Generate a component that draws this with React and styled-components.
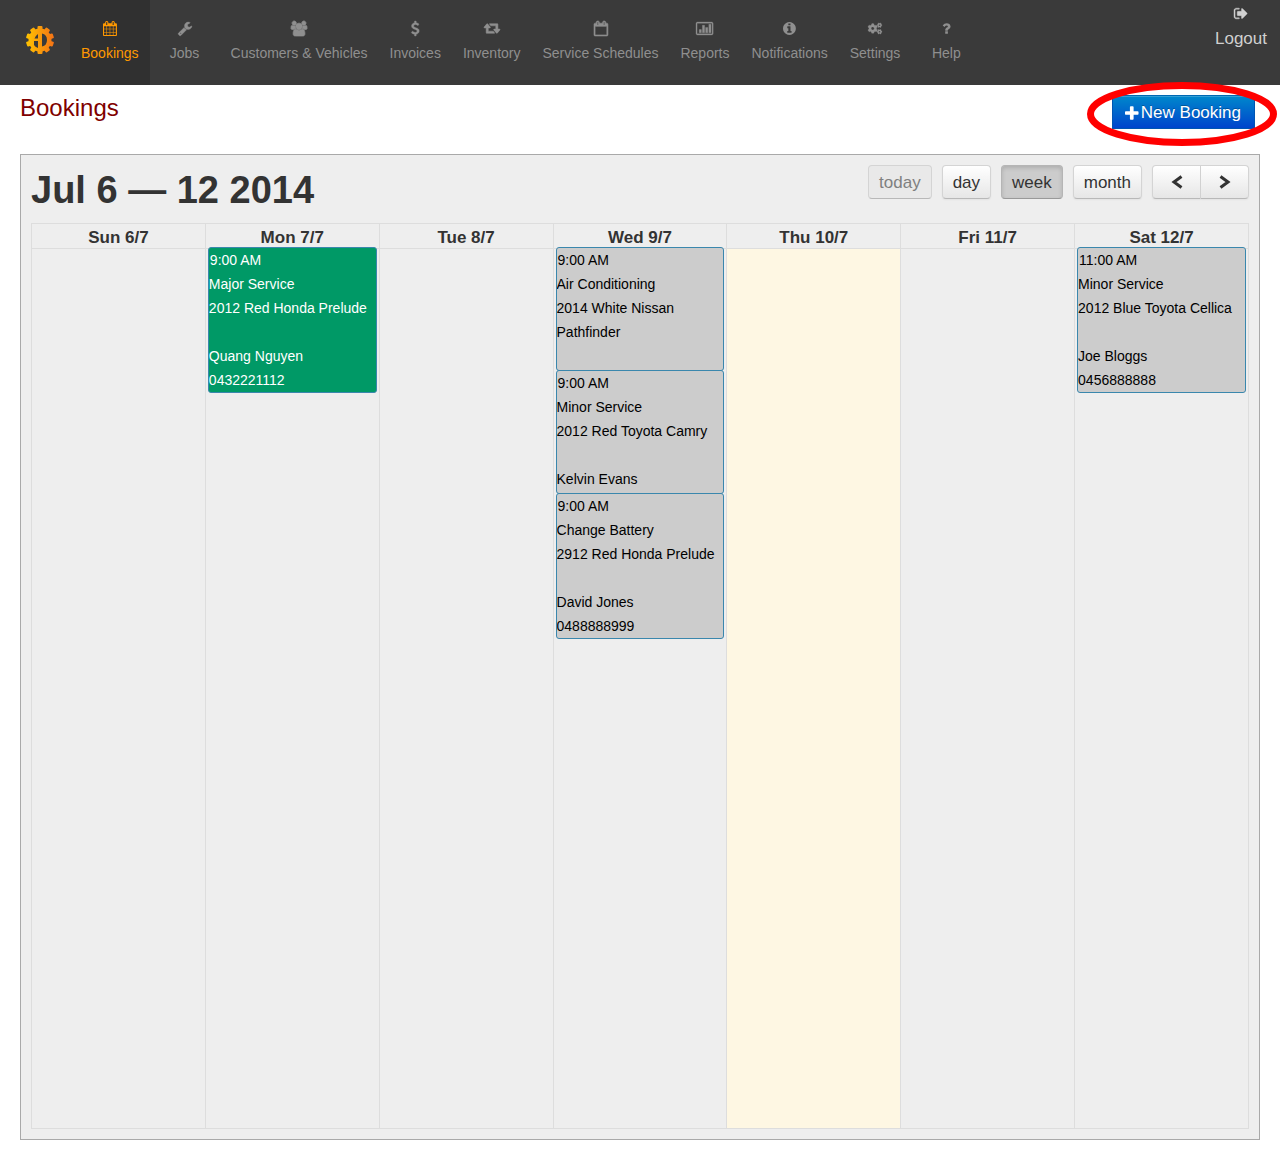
import React from "react";
import styled, { createGlobalStyle, css } from "styled-components";
import { FaCogs } from "react-icons/fa";

const Global = createGlobalStyle`
  *, *::before, *::after { box-sizing: border-box; }
  body {
    margin: 0;
    background: #fff;
    color: #333;
    font-family: "Liberation Sans", Arial, sans-serif;
    font-size: 17px;
    line-height: 24px;
  }
`;

const ICONS = {
  calendar: ["64 0 1664 1792", "M192 1664h288v-288h-288v288zm352 0h320v-288h-320v288zm-352-352h288v-320h-288v320zm352 0h320v-320h-320v320zm-352-384h288v-288h-288v288zm736 736h320v-288h-320v288zm-384-736h320v-288h-320v288zm768 736h288v-288h-288v288zm-384-352h320v-320h-320v320zm-352-864v-288q0-13-9.5-22.5t-22.5-9.5h-64q-13 0-22.5 9.5t-9.5 22.5v288q0 13 9.5 22.5t22.5 9.5h64q13 0 22.5-9.5t9.5-22.5zm736 864h288v-320h-288v320zm-384-384h320v-288h-320v288zm384 0h288v-288h-288v288zm32-480v-288q0-13-9.5-22.5t-22.5-9.5h-64q-13 0-22.5 9.5t-9.5 22.5v288q0 13 9.5 22.5t22.5 9.5h64q13 0 22.5-9.5t9.5-22.5zm384-64v1280q0 52-38 90t-90 38h-1408q-52 0-90-38t-38-90v-1280q0-52 38-90t90-38h128v-96q0-66 47-113t113-47h64q66 0 113 47t47 113v96h384v-96q0-66 47-113t113-47h64q66 0 113 47t47 113v96h128q52 0 90 38t38 90z"],
  calendarOutline: ["64 0 1664 1792", "M192 1664h1408v-1024h-1408v1024zm384-1216v-288q0-13-9.5-22.5t-22.5-9.5h-64q-13 0-22.5 9.5t-9.5 22.5v288q0 13 9.5 22.5t22.5 9.5h64q13 0 22.5-9.5t9.5-22.5zm768 0v-288q0-13-9.5-22.5t-22.5-9.5h-64q-13 0-22.5 9.5t-9.5 22.5v288q0 13 9.5 22.5t22.5 9.5h64q13 0 22.5-9.5t9.5-22.5zm384-64v1280q0 52-38 90t-90 38h-1408q-52 0-90-38t-38-90v-1280q0-52 38-90t90-38h128v-96q0-66 47-113t113-47h64q66 0 113 47t47 113v96h384v-96q0-66 47-113t113-47h64q66 0 113 47t47 113v96h128q52 0 90 38t38 90z"],
  wrench: ["64 0 1664 1792", "M448 1472q0-26-19-45t-45-19-45 19-19 45 19 45 45 19 45-19 19-45zm644-420l-682 682q-37 37-90 37-52 0-91-37l-106-108q-38-36-38-90 0-53 38-91l681-681q39 98 114.5 173.5t173.5 114.5zm634-435q0 39-23 106-47 134-164.5 217.5t-258.5 83.5q-185 0-316.5-131.5t-131.5-316.5 131.5-316.5 316.5-131.5q58 0 121.5 16.5t107.5 46.5q16 11 16 28t-16 28l-293 169v224l193 107q5-3 79-48.5t135.5-81 70.5-35.5q15 0 23.5 10t8.5 25z"],
  users: ["0 0 1920 1792", "M593 896q-162 5-265 128h-134q-82 0-138-40.5t-56-118.5q0-353 124-353 6 0 43.5 21t97.5 42.5 119 21.5q67 0 133-23-5 37-5 66 0 139 81 256zM1664 1533q0 120-73 189.5t-194 69.5h-874q-121 0-194-69.5t-73-189.5q0-53 3.5-103.5t14-109 26.5-108.5 43-97.5 62-81 85.5-53.5 111.5-20q10 0 43 21.5t73 48 107 48 135 21.5 135-21.5 107-48 73-48 43-21.5q61 0 111.5 20t85.5 53.5 62 81 43 97.5 26.5 108.5 14 109 3.5 103.5zM640 256q0 106-75 181t-181 75-181-75-75-181 75-181 181-75 181 75 75 181zM1344 640q0 159-112.5 271.5t-271.5 112.500-271.5-112.500-112.500-271.500 112.500-271.500 271.500-112.500 271.500 112.500 112.500 271.500zM1920 865q0 78-56 118.500t-138 40.500h-134q-103-123-265-128 81-117 81-256 0-29-5-66 66 23 133 23 59 0 119-21.500t97.500-42.500 43.500-21q124 0 124 353zM1792 256q0 106-75 181t-181 75-181-75-75-181 75-181 181-75 181 75 75 181z"],
  dollar: ["384 0 1024 1792", "M1362 1185q0 153-99.5 263.5t-258.5 136.5v175q0 14-9 23t-23 9h-135q-13 0-22.5-9.5t-9.5-22.5v-175q-66-9-127.5-31t-101.5-44.5-74-48-46.5-37.5-17.5-18q-17-21-2-41l103-135q7-10 23-12 15-2 24 9l2 2q113 99 243 125 37 8 74 8 81 0 142.5-43t61.5-122q0-28-15-53t-33.5-42-58.5-37.5-66-32-80-32.5q-39-16-61.5-25t-61.5-26.5-62.5-31-56.5-35.5-53.5-42.5-43.5-49-35.5-58-21-66.5-8.5-78q0-138 98-242t255-134v-180q0-13 9.5-22.5t22.5-9.5h135q14 0 23 9t9 23v176q57 6 110.5 23t87 33.5 63.5 37.5 39 29 15 14q17 18 5 38l-81 146q-8 15-23 16-14 3-27-7-3-3-14.5-12t-39-26.5-58.5-32-74.5-26-85.5-11.5q-95 0-155 43t-60 111q0 26 8.5 48t29.5 41.5 39.5 33 56 31 60.5 27 70 27.5q53 20 81 31.5t76 35 75.5 42.5 62 50 53 63.5 31.5 76.5 13 94z"],
  retweet: ["64 64 1920 1792", "M1344 1504q0 13-9.5 22.5t-22.5 9.5h-960q-8 0-13.5-2t-9-7-5.5-8-3-11.5-1-11.5v-600h-192q-26 0-45-19t-19-45q0-24 15-41l320-384q19-22 49-22t49 22l320 384q15 17 15 41 0 26-19 45t-45 19h-192v384h576q16 0 25 11l160 192q7 10 7 21zm640-416q0 24-15 41l-320 384q-20 23-49 23t-49-23l-320-384q-15-17-15-41 0-26 19-45t45-19h192v-384h-576q-16 0-25-12l-160-192q-7-9-7-20 0-13 9.5-22.5t22.5-9.5h960q8 0 13.5 2t9 7 5.5 8 3 11.5 1 11.5v600h192q26 0 45 19t19 45z"],
  chart: ["0 0 2048 1792", "M160 128h1728q66 0 113 47t47 113v1216q0 66-47 113t-113 47h-1728q-66 0-113-47t-47-113v-1216q0-66 47-113t113-47zm0 128q-32 0-32 32v1216q0 32 32 32h1728q32 0 32-32v-1216q0-32-32-32zM384 1024h256v384h-256zM768 512h256v896h-256zM1152 768h256v640h-256zM1536 384h256v1024h-256z"],
  info: ["128 0 1536 1792", "M1152 1376v-160q0-14-9-23t-23-9h-96v-512q0-14-9-23t-23-9h-320q-14 0-23 9t-9 23v160q0 14 9 23t23 9h96v320h-96q-14 0-23 9t-9 23v160q0 14 9 23t23 9h448q14 0 23-9t9-23zm-128-896v-160q0-14-9-23t-23-9h-192q-14 0-23 9t-9 23v160q0 14 9 23t23 9h192q14 0 23-9t9-23zm640 416q0 209-103 385.5t-279.5 279.5-385.5 103-385.5-103-279.5-279.5-103-385.5 103-385.5 279.5-279.5 385.5-103 385.5 103 279.5 279.5 103 385.5z"],
  question: ["384 0 1024 1792", "M1088 1256v240q0 16-12 28t-28 12h-240q-16 0-28-12t-12-28v-240q0-16 12-28t28-12h240q16 0 28 12t12 28zm316-600q0 54-15.5 101t-35 76.5-55 59.5-57.5 43.5-61 35.5q-41 23-68.5 65t-27.5 67q0 17-12 32.5t-28 15.5h-240q-15 0-25.5-18.5t-10.5-37.5v-45q0-83 65-156.5t143-108.5q59-27 84-56t25-76q0-42-46.5-74t-107.5-32q-65 0-108 29-35 25-107 115-13 16-31 16-12 0-25-8l-164-125q-13-10-15.5-25t5.5-28q160-266 464-266 80 0 161 31t146 83 106 127.5 41 158.5z"],
  signOut: ["64 0 1600 1792", "M704 1440q0 4 1 20t.5 26.5-3 23.5-10 19.5-20.5 6.5h-320q-119 0-203.5-84.5t-84.5-203.5v-704q0-119 84.5-203.5t203.5-84.5h320q13 0 22.5 9.5t9.5 22.5q0 4 1 20t.5 26.5-3 23.5-10 19.5-20.5 6.5h-320q-66 0-113 47t-47 113v704q0 66 47 113t113 47h312l11.5 1 11.5 3 8 5.5 7 9 2 13.5zm928-544q0 26-19 45l-544 544q-19 19-45 19t-45-19-19-45v-288h-448q-26 0-45-19t-19-45v-384q0-26 19-45t45-19h448v-288q0-26 19-45t45-19 45 19l544 544q19 19 19 45z"],
  plus: ["192 0 1408 1664", "M1600 736v192q0 40-28 68t-68 28h-416v416q0 40-28 68t-68 28h-192q-40 0-68-28t-28-68v-416h-416q-40 0-68-28t-28-68v-192q0-40 28-68t68-28h416v-416q0-40 28-68t68-28h192q40 0 68 28t28 68v416h416q40 0 68 28t28 68z"],
};

const BOLD = { users: 90, calendarOutline: 70, chart: 40, dollar: 50, retweet: 60, signOut: 50, wrench: 40 };

const Glyph = styled.svg`
  display: block;
  height: ${(p) => p.$size || 15}px;
  fill: currentColor;
  stroke: currentColor;
  overflow: visible;
`;

function Icon({ name, size }) {
  if (name === "cogs") return <Glyph as={FaCogs} width="16" height="15" strokeWidth="14" aria-hidden="true" />;
  const [viewBox, d] = ICONS[name];
  return (
    <Glyph viewBox={viewBox} $size={size} aria-hidden="true">
      <path d={d} strokeWidth={BOLD[name] || 0} fillRule={name === "users" ? "nonzero" : "evenodd"} />
    </Glyph>
  );
}

const TopBar = styled.header`
  display: flex;
  height: 85px;
  background: #3a3a3a;
`;

const Brand = styled.a`
  display: flex;
  justify-content: center;
  width: 70px;
  padding: 26px 0 0 10px;
`;

const Nav = styled.nav`
  display: flex;
  flex: 1;
`;

const NavLink = styled.a`
  display: flex;
  flex-direction: column;
  align-items: center;
  gap: 5px;
  min-width: 70px;
  padding: 21px 11px 0;
  font-size: 14px;
  white-space: nowrap;
  text-decoration: none;
  color: ${(p) => (p.$active ? "#ff9900" : "#8f8f8f")};
  background: ${(p) => (p.$active ? "#303030" : "transparent")};
`;

const Logout = styled.a`
  display: flex;
  flex-direction: column;
  align-items: center;
  gap: 6px;
  padding: 6px 13px 0;
  color: #d0d0d0;
  text-decoration: none;
`;

const PageHead = styled.div`
  display: flex;
  justify-content: space-between;
  align-items: flex-start;
  height: 69px;
  padding: 10px 25px 0 20px;
`;

const Title = styled.h1`
  margin: 0;
  font-size: 24px;
  line-height: 26px;
  font-weight: 400;
  color: #800000;
`;

const Highlight = styled.div`
  position: relative;
`;

const Ring = styled.svg`
  position: absolute;
  left: -25px;
  top: -13px;
  width: 190px;
  height: 64px;
  pointer-events: none;
`;

const NewBooking = styled.button`
  display: flex;
  align-items: center;
  gap: 2px;
  height: 34px;
  padding: 1px 13px 0 12px;
  border: 1px solid #0055b3;
  border-top-color: #0068b3;
  background: linear-gradient(#0088cc, #0044cc);
  box-shadow: inset 0 1px 0 rgba(255, 255, 255, 0.2);
  color: #fff;
  font: 17px/24px "Liberation Sans", Arial, sans-serif;
  text-shadow: 0 -1px 0 rgba(0, 0, 0, 0.25);
  white-space: nowrap;
`;

const Calendar = styled.main`
  margin: 0 20px 12px;
  padding: 10px;
  border: 1px solid #a9a9a9;
  background: #eee;
`;

const Toolbar = styled.div`
  display: flex;
  justify-content: space-between;
  align-items: flex-start;
  height: 58px;
`;

const Range = styled.h2`
  margin: 0;
  font-size: 38px;
  line-height: 50px;
  font-weight: 700;
`;

const Controls = styled.div`
  display: flex;
  gap: 10px;
`;

const ButtonGroup = styled.div`
  display: flex;
`;

const Button = styled.button`
  display: flex;
  align-items: center;
  justify-content: center;
  height: 34px;
  padding: 1px 10px 0;
  border: 1px solid #d4d4d4;
  border-bottom-color: #b8b8b8;
  border-radius: 4px;
  background: linear-gradient(#fff, #e6e6e6);
  box-shadow: inset 0 1px 0 rgba(255, 255, 255, 0.2), 0 1px 2px rgba(0, 0, 0, 0.05);
  color: #333;
  font: 17px/24px "Liberation Sans", Arial, sans-serif;
  ${(p) => p.disabled && css`
    background: #e9e9e9;
    box-shadow: none;
    color: #808080;
  `}
  ${(p) => p.$active && css`
    background: #ccc;
    border-color: #b5b5b5;
    border-bottom-color: #999;
    box-shadow: inset 0 2px 4px rgba(0, 0, 0, 0.15);
  `}
  ${ButtonGroup} > & {
    width: 49px;
    padding: 0;
    &:first-child { border-radius: 4px 0 0 4px; }
    &:last-child { width: 48px; border-left: 0; border-radius: 0 4px 4px 0; }
  }
`;

const Chevron = styled.svg`
  width: 12px;
  height: 14px;
  fill: none;
  stroke: currentColor;
  stroke-width: 3;
`;

const Week = styled.table`
  width: 100%;
  border-collapse: collapse;
  table-layout: fixed;
`;

const DayName = styled.th`
  height: 25px;
  padding: 4px 0 0;
  border: 1px solid #ddd;
  font-size: 17px;
  line-height: 20px;
`;

const Day = styled.td`
  height: 880px;
  padding: 0 2px;
  border: 1px solid #ddd;
  vertical-align: top;
  background: ${(p) => (p.$today ? "#fef7e3" : "transparent")};
`;

const DayEvents = styled.div`
  position: relative;
  margin-top: -2px;
`;

const Event = styled.article`
  height: ${(p) => (p.$stacked ? 124 : 146)}px;
  overflow: hidden;
  border: 1px solid #3a87ad;
  border-radius: 3px;
  background: ${(p) => (p.$done ? "#009966" : "#ccc")};
  color: ${(p) => (p.$done ? "#fff" : "#000")};
  font-size: 14px;
  line-height: 24px;
  & + & { margin-top: -1px; }
`;

const Time = styled.time`
  display: block;
  padding-left: 1px;
`;

const Line = styled.div`
  min-height: 24px;
`;

const NAV = [
  ["Bookings", "calendar"],
  ["Jobs", "wrench"],
  ["Customers & Vehicles", "users"],
  ["Invoices", "dollar"],
  ["Inventory", "retweet"],
  ["Service Schedules", "calendarOutline"],
  ["Reports", "chart"],
  ["Notifications", "info"],
  ["Settings", "cogs"],
  ["Help", "question"],
];

const DAYS = [
  { name: "Sun 6/7", events: [] },
  { name: "Mon 7/7", events: [
    { time: "9:00 AM", done: true, lines: ["Major Service", "2012 Red Honda Prelude", "", "Quang Nguyen", "0432221112"] },
  ] },
  { name: "Tue 8/7", events: [] },
  { name: "Wed 9/7", events: [
    { time: "9:00 AM", stacked: true, lines: ["Air Conditioning", "2014 White Nissan Pathfinder"] },
    { time: "9:00 AM", stacked: true, lines: ["Minor Service", "2012 Red Toyota Camry", "", "Kelvin Evans"] },
    { time: "9:00 AM", lines: ["Change Battery", "2912 Red Honda Prelude", "", "David Jones", "0488888999"] },
  ] },
  { name: "Thu 10/7", today: true, events: [] },
  { name: "Fri 11/7", events: [] },
  { name: "Sat 12/7", events: [
    { time: "11:00 AM", lines: ["Minor Service", "2012 Blue Toyota Cellica", "", "Joe Bloggs", "0456888888"] },
  ] },
];

const TEETH = [0, 36, 72, 108, 144, 180, 216, 252, 288, 324];

function Logo() {
  return (
    <svg width="28" height="29" viewBox="0 0 28 29" aria-hidden="true">
      <defs>
        <linearGradient id="flame" gradientUnits="userSpaceOnUse" x1="0" y1="0" x2="28" y2="0">
          <stop offset="0" stopColor="#ffc400" />
          <stop offset="1" stopColor="#f47216" />
        </linearGradient>
        <mask id="gear">
          <g fill="#fff">
            <circle cx="14" cy="14" r="11.500" />
            {TEETH.map((a) => (
              <rect key={a} x="11.500" y="0" width="5" height="6" rx="1" transform={`rotate(${a} 14 14)`} />
            ))}
          </g>
          <path d="M12 8v4.500H8.500Q9.500 9.500 12 8zM8 15h4v7q-3-1-4-3zM16 7.500q5 1 5 6.500t-5 6.500z" fill="#000" />
        </mask>
      </defs>
      <rect width="28" height="29" fill="url(#flame)" mask="url(#gear)" />
    </svg>
  );
}

export default function App() {
  return (
    <>
      <Global />
      <TopBar>
        <Brand href="#" aria-label="Home"><Logo /></Brand>
        <Nav>
          {NAV.map(([label, icon], i) => (
            <NavLink key={label} href="#" $active={i === 0}>
              <Icon name={icon} />
              {label}
            </NavLink>
          ))}
        </Nav>
        <Logout href="#"><Icon name="signOut" />Logout</Logout>
      </TopBar>
      <PageHead>
        <Title>Bookings</Title>
        <Highlight>
          <NewBooking type="button"><Icon name="plus" size={16} />New Booking</NewBooking>
          <Ring viewBox="0 0 190 64" aria-hidden="true">
            <ellipse cx="95" cy="32" rx="91.500" ry="28.500" fill="none" stroke="#f00" strokeWidth="7" />
          </Ring>
        </Highlight>
      </PageHead>
      <Calendar>
        <Toolbar>
          <Range>Jul 6 — 12 2014</Range>
          <Controls>
            <Button type="button" disabled>today</Button>
            <Button type="button">day</Button>
            <Button type="button" $active aria-pressed="true">week</Button>
            <Button type="button">month</Button>
            <ButtonGroup>
              <Button type="button" aria-label="Previous">
                <Chevron viewBox="0 0 12 14"><path d="M10.500 1.500 3 7l7.500 5.500" /></Chevron>
              </Button>
              <Button type="button" aria-label="Next">
                <Chevron viewBox="0 0 12 14"><path d="M1.500 1.500 9 7l-7.500 5.500" /></Chevron>
              </Button>
            </ButtonGroup>
          </Controls>
        </Toolbar>
        <Week>
          <thead>
            <tr>{DAYS.map((d) => <DayName key={d.name} scope="col">{d.name}</DayName>)}</tr>
          </thead>
          <tbody>
            <tr>
              {DAYS.map((d) => (
                <Day key={d.name} $today={d.today}>
                  <DayEvents>
                    {d.events.map((e, i) => (
                      <Event key={i} $done={e.done} $stacked={e.stacked}>
                        <Time>{e.time}</Time>
                        {e.lines.map((l, j) => <Line key={j}>{l}</Line>)}
                      </Event>
                    ))}
                  </DayEvents>
                </Day>
              ))}
            </tr>
          </tbody>
        </Week>
      </Calendar>
    </>
  );
}
